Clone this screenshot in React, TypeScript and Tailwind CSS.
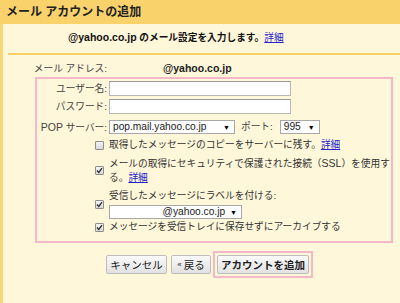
import React from 'react';

const font = "font-['Liberation_Sans','Noto_Sans_CJK_JP',sans-serif]";

function Link({ children }: { children: React.ReactNode }) {
    return <a className="text-[#2323c8] underline">{children}</a>;
}

function Lat({ children }: { children: React.ReactNode }) {
    return <span className="text-[10.5px]">{children}</span>;
}

function Box({ checked }: { checked?: boolean }) {
    return (
        <span className="w-[9px] h-[9px] shrink-0 border border-[#8e8e8e] rounded-[1px] bg-gradient-to-b from-[#f4f4f4] to-[#d9d9d9] flex items-center justify-center">
            {checked && (
                <svg width="7" height="7" viewBox="0 0 7 7">
                    <path d="M1 3.6 L2.8 5.4 L6 1.2" stroke="#333" strokeWidth="1.4" fill="none" />
                </svg>
            )}
        </span>
    );
}

function Select({ value, width, right }: { value: string; width: string; right?: boolean }) {
    return (
        <div className={`${width} h-[14px] bg-white border border-[#a8a8a8] flex items-center pl-[3px] pr-[4px] text-[10.2px] text-[#222]`}>
            <span className={`flex-1 ${right ? 'text-right pr-[5px]' : ''}`}>{value}</span>
            <span className="text-[7px] leading-none text-black">▼</span>
        </div>
    );
}

function Field() {
    return <div className="w-[182px] h-[15px] bg-white border border-[#b8b8b8] border-t-[#999]" />;
}

function Btn({ children, w, bold }: { children: React.ReactNode; w: string; bold?: boolean }) {
    return (
        <button className={`${w} h-[19px] rounded-[2px] border border-[#bdbdbd] bg-gradient-to-b from-[#fafafa] to-[#e2e2e2] text-[10.5px] text-[#222] ${bold ? 'font-bold' : ''} flex items-center justify-center whitespace-nowrap`}>
            {children}
        </button>
    );
}

export default function App() {
    return (
        <div className={`w-[400px] h-[303px] bg-[#fff7da] overflow-hidden ${font} text-[9.7px] leading-[14px] text-[#333] whitespace-nowrap`}>
            <div className="h-[24px] bg-[#f9d26c] pl-[6px] flex items-center text-[12px] font-bold text-[#222]">
                メール アカウントの追加
            </div>
            <div className="h-[279px] border-l-[3px] border-[#f8d674]">
                <div className="pt-[6px] pl-[65px] text-[#111] font-bold">
                    <Lat>@yahoo.co.jp</Lat> のメール設定を入力します。<span className="font-normal"><Link>詳細</Link></span>
                </div>
                <div className="mt-[8px] ml-[5px] h-[2px] bg-[#f8ce66]" />
                <div className="mt-[6px] flex items-center">
                    <span className="w-[104px] text-right text-[#444]">メール アドレス:</span>
                    <span className="ml-[56px] font-bold text-[#222]"><Lat>@yahoo.co.jp</Lat></span>
                </div>
                <div className="mt-[1px] ml-[32px] w-[358px] h-[166px] border-2 border-[#f5b8c8] pt-[2px]">
                    <div className="flex items-center gap-[2px] h-[15px]">
                        <span className="w-[70px] text-right text-[#444]">ユーザー名:</span>
                        <Field />
                    </div>
                    <div className="mt-[3px] flex items-center gap-[2px] h-[15px]">
                        <span className="w-[70px] text-right text-[#444]">パスワード:</span>
                        <Field />
                    </div>
                    <div className="mt-[6px] flex items-center gap-[2px] h-[14px]">
                        <span className="w-[70px] text-right text-[#444]"><Lat>POP</Lat> サーバー:</span>
                        <Select value="pop.mail.yahoo.co.jp" width="w-[126px]" />
                        <span className="ml-[4px] text-[#444]">ポート:</span>
                        <span className="ml-[5px]">
                            <Select value="995" width="w-[40px]" />
                        </span>
                    </div>
                    <div className="mt-[4px] flex items-center gap-[5px] pl-[58px]">
                        <Box />
                        <span className="text-[#333]">取得したメッセージのコピーをサーバーに残す。<Link>詳細</Link></span>
                    </div>
                    <div className="mt-[4px] flex items-center gap-[5px] pl-[58px]">
                        <Box checked />
                        <span className="text-[#333]">
                            メールの取得にセキュリティで保護された接続（<Lat>SSL</Lat>）を使用す
                            <br />
                            る。<Link>詳細</Link>
                        </span>
                    </div>
                    <div className="mt-[4px] flex items-center gap-[5px] pl-[58px]">
                        <Box checked />
                        <div className="flex flex-col">
                            <span className="text-[#333]">受信したメッセージにラベルを付ける:</span>
                            <div className="mt-[2px]">
                                <Select value="@yahoo.co.jp" width="w-[133px]" right />
                            </div>
                        </div>
                    </div>
                    <div className="mt-[1px] flex items-center gap-[5px] pl-[58px]">
                        <Box checked />
                        <span className="text-[#333]">メッセージを受信トレイに保存せずにアーカイブする</span>
                    </div>
                </div>
                <div className="mt-[8px] ml-[103px] flex items-center">
                    <Btn w="w-[61px]">キャンセル</Btn>
                    <span className="ml-[4px]">
                        <Btn w="w-[40px]">
                            <span className="text-[8px] mr-[2px]">«</span>戻る
                        </Btn>
                    </span>
                    <div className="ml-[2px] border-2 border-[#f5b8c8] p-[2px]">
                        <Btn w="w-[92px]" bold>アカウントを追加</Btn>
                    </div>
                </div>
            </div>
        </div>
    );
}
